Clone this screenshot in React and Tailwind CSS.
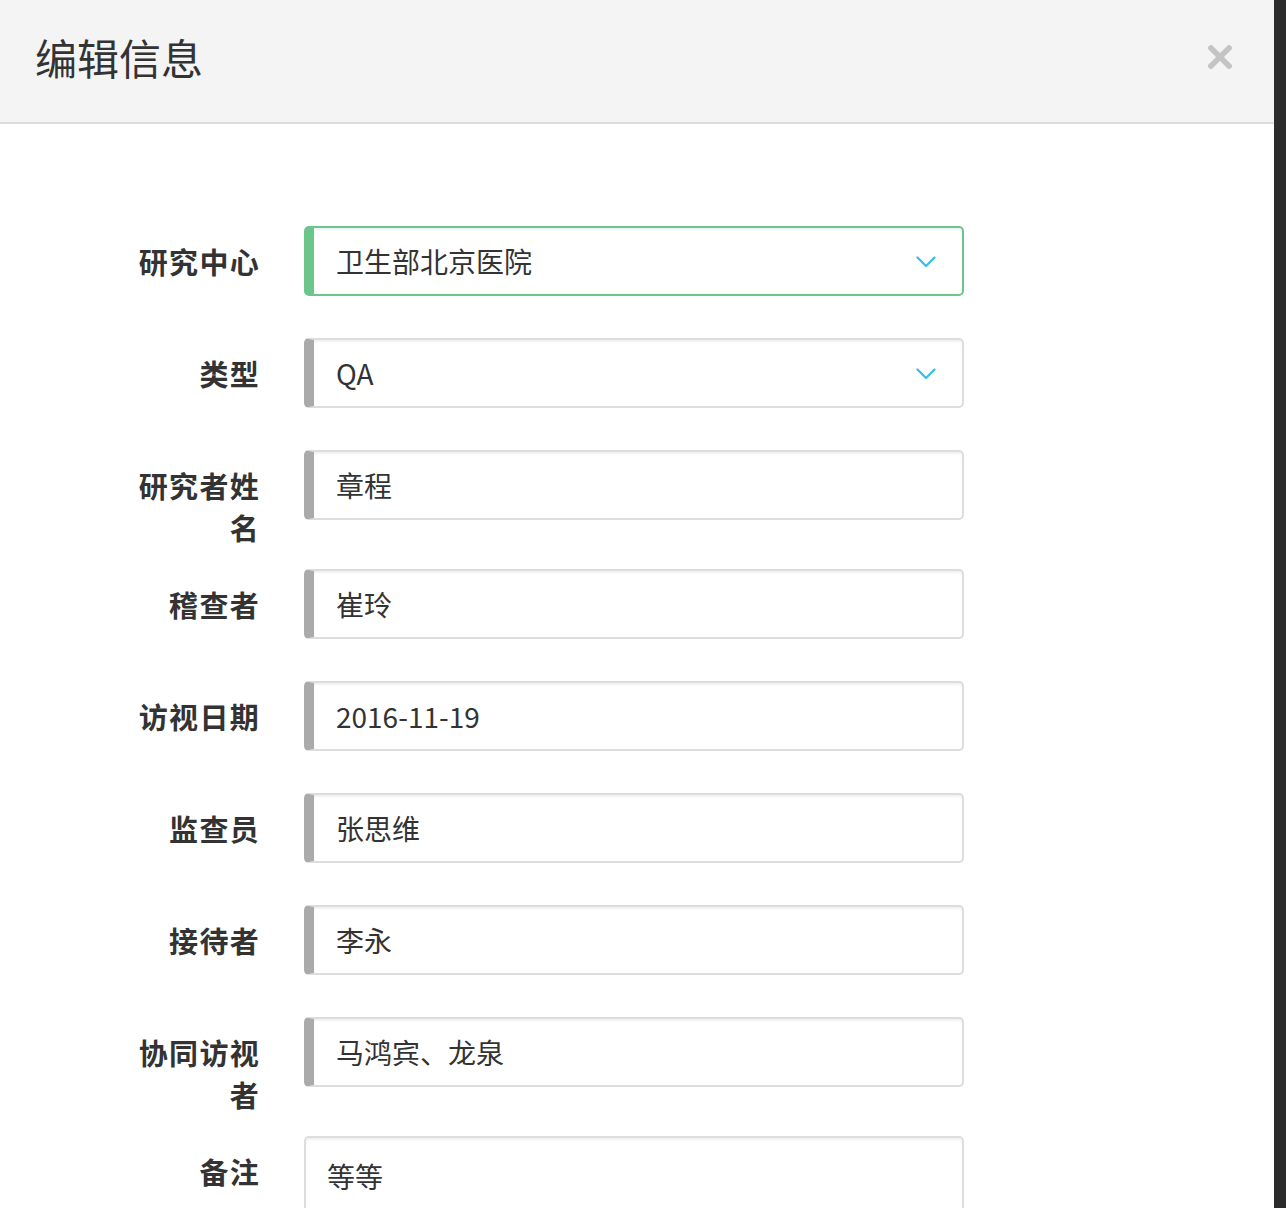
import React from "react";

const fields = [
  { label: "研究中心", value: "卫生部北京医院", select: true, active: true },
  { label: "类型", value: "QA", select: true },
  { label: "研究者姓名", value: "章程", tall: true },
  { label: "稽查者", value: "崔玲" },
  { label: "访视日期", value: "2016-11-19" },
  { label: "监查员", value: "张思维" },
  { label: "接待者", value: "李永" },
  { label: "协同访视者", value: "马鸿宾、龙泉", tall: true },
];

const Chevron = () => (
  <svg width="20" height="12" viewBox="0 0 20 12" fill="none" className="mt-[2px] shrink-0">
    <path d="M1.5 1.5 L10 10 L18.5 1.5" stroke="#34bde8" strokeWidth="2.2" strokeLinecap="round" strokeLinejoin="round" />
  </svg>
);

const Field = ({ label, value, select, active, tall }) => (
  <div className={`flex items-start ${tall ? "mb-[21px]" : "mb-[42px]"}`}>
    <label className="ml-[131px] w-[129px] shrink-0 pt-[14px] text-right text-[29px] leading-[42px] font-bold tracking-[1.3px] text-[#333333]">
      {label}
    </label>
    <div
      className={`ml-[44px] flex h-[70px] w-[660px] items-center justify-between rounded-[5px] border-2 border-l-[10px] pl-[22px] pr-[26px] shadow-[inset_0_2px_2px_rgba(0,0,0,0.06)] ${
        active ? "border-[#6cc68c]" : "border-[#dddddd] border-l-[#aaaaaa]"
      }`}
    >
      <span className="text-[28px] text-[#333333]">{value}</span>
      {select && <Chevron />}
    </div>
  </div>
);

export default function App() {
  return (
    <div
      className="flex h-[1208px] w-[1286px] overflow-hidden bg-white"
      style={{ fontFamily: '"Noto Sans CJK SC", "Noto Sans", "Liberation Sans", sans-serif' }}
    >
      <div className="flex flex-1 flex-col">
        <header className="flex h-[124px] shrink-0 items-center justify-between border-b-2 border-[#dddddd] bg-[#f4f4f4] pb-[8px] pl-[35px] pr-[42px]">
          <h1 className="text-[42px] font-normal leading-none text-[#333333]">编辑信息</h1>
          <svg width="24" height="24" viewBox="0 0 24 24">
            <path d="M3 3 L21 21 M21 3 L3 21" stroke="#c4c4c4" strokeWidth="5.5" strokeLinecap="square" />
          </svg>
        </header>
        <main className="pt-[102px]">
          {fields.map((f) => (
            <Field key={f.label} {...f} />
          ))}
          <div className="flex items-start">
            <label className="ml-[131px] w-[129px] shrink-0 pt-[14px] text-right text-[29px] leading-[42px] font-bold tracking-[1.3px] text-[#333333]">
              备注
            </label>
            <div className="ml-[44px] h-[140px] w-[660px] rounded-[5px] border-2 border-[#dddddd] pl-[21px] pt-[20px] shadow-[inset_0_2px_2px_rgba(0,0,0,0.06)]">
              <span className="text-[28px] leading-[36px] text-[#333333]">等等</span>
            </div>
          </div>
        </main>
      </div>
      <div className="w-[12px] shrink-0 bg-[#2b2b2b]" />
    </div>
  );
}
